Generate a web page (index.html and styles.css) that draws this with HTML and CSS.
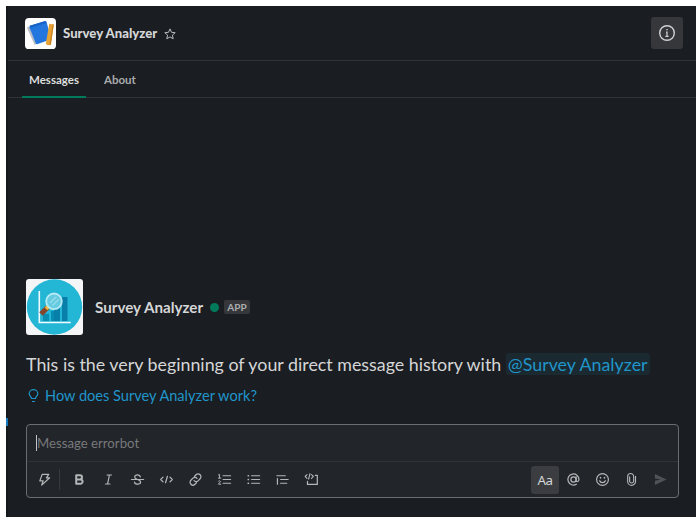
FILE: index.html
```html
<!DOCTYPE html>
<html lang="en">
<head>
<meta charset="utf-8">
<title>Survey Analyzer</title>
<link rel="stylesheet" href="styles.css">
</head>
<body>
<div class="app">
  <div class="rail"><span class="rail-mark"></span></div>
  <main class="panel">
    <header class="header">
      <svg class="logo" viewBox="0 0 32 32"><rect width="32" height="32" rx="4" fill="#fff"/><path d="M2 10l2.500-1.500 7.500 18-2 1.300z" fill="#b9bdc4"/><path d="M5 8L21 3.200q1 0 1.300 1L27 22l-14.500 5q-1 0-1.400-1L4.500 9.500z" fill="#2476df"/><path d="M5 8L21 3.200l.9 2-16 5z" fill="#1763c7"/><path d="M25 6l4.700.6-3 21-3.500.6-1.700-1.500z" fill="#e8a536"/><path d="M28.500 6.500l1.200.1-3 21-1.500.4z" fill="#c98521"/></svg>
      <h1 class="title">Survey Analyzer</h1>
      <svg class="star" viewBox="0 0 12 12"><path d="M6 .9l1.500 3.400 3.700.4-2.800 2.400.8 3.700L6 8.900l-3.200 1.900.8-3.700L.8 4.700l3.700-.4z"/></svg>
      <button class="info" aria-label="Details"><svg viewBox="0 0 18 18"><circle cx="9" cy="9" r="7.300"/><path d="M8 8.200h1v4M7.400 12.400h3.200" stroke-width="1.200"/><path d="M8.300 5.600h1.400"/></svg></button>
    </header>
    <nav class="tabs"><span class="tab active">Messages</span><span class="tab">About</span></nav>
    <section class="history">
      <div class="profile">
        <svg class="avatar" viewBox="0 0 57 56"><rect width="57" height="56" rx="3" fill="#f4f5f6"/><circle cx="28.500" cy="28" r="27.700" fill="#24b6d5"/><path d="M17 35h6v7h-6zM25 32h5v10h-5z" fill="#078cb2"/><path d="M28 25h6v17h-6zM36 18h5.500v24H36z" fill="#087fa9"/><path d="M13.300 12v31.500h31.500" fill="none" stroke="#eefafd" stroke-width="1.600"/><path d="M21.500 28.500l-6.500 6.500" stroke="#87452c" stroke-width="5"/><path d="M23 26.800l-3 3" stroke="#edb63a" stroke-width="4"/><circle cx="28" cy="22.300" r="7.800" fill="#66cbe0" stroke="#b5eaf5" stroke-width="1.800"/><path d="M24 24l6-6M26.500 26.500l6-6" stroke="#91dcea" stroke-width="1.500"/></svg>
        <h2 class="name">Survey Analyzer</h2><span class="presence"></span><span class="badge">APP</span>
      </div>
      <p class="intro">This is the very beginning of your direct message history with <span class="mention">@Survey Analyzer</span></p>
      <div class="help"><svg viewBox="0 0 11 14"><path d="M3.500 9.500C3.500 7.700 1.200 7 1.200 4.700a4.300 4 0 0 1 8.600 0C9.800 7 7.500 7.700 7.500 9.500zM4 12.500h3"/></svg><span>How does Survey Analyzer work?</span></div>
    </section>
    <section class="composer">
      <div class="input"><span class="caret"></span><span class="placeholder">Message errorbot</span></div>
      <div class="toolbar">
        <span class="tool first"><svg viewBox="0 0 16 16"><path d="M5.500 2.500h7L10 6.200h3.500L5 14l1.500-4.500H3z"/></svg></span>
        <span class="separator"></span>
        <span class="tool"><svg viewBox="0 0 16 16"><path stroke-width="2.100" d="M4.500 3.500h4a2.200 2.200 0 0 1 0 4.400h-4zM4.500 7.900H9a2.300 2.300 0 0 1 0 4.600H4.500z"/></svg></span>
        <span class="tool"><svg viewBox="0 0 16 16"><path d="M6.500 3.200h4.700M4.800 12.800h4.700M9 3.200L7 12.800"/></svg></span>
        <span class="tool"><svg viewBox="0 0 16 16"><path d="M1.500 8h13M11 5.300C10.500 2.500 5 2.400 5 5.300 5 6.700 6.200 7.300 8 8c2 .6 3.300 1.200 3.300 2.700 0 3-6 3-6.500 0"/></svg></span>
        <span class="tool"><svg viewBox="0 0 16 16"><path d="M4.300 5.500L1.800 8l2.500 2.500M11.700 5.500L14.200 8l-2.500 2.500M9 4.500l-2 7"/></svg></span>
        <span class="tool"><svg viewBox="0 0 16 16"><path d="M7 4.500l1.600-1.600a2.900 2.900 0 0 1 4.300 4.300l-2.200 2.200a2.900 2.900 0 0 1-4.300-.2M9 11.500l-1.600 1.600a2.900 2.900 0 0 1-4.300-4.300l2.200-2.200a2.900 2.900 0 0 1 4.300.2"/></svg></span>
        <span class="tool"><svg viewBox="0 0 16 16"><path d="M6.500 4h8M6.500 8h8M6.500 12h8"/><path stroke-width="1" d="M1.500 3.200l1.200-.7v4M1.500 6.500h2.600M1.500 9.800c.5-1 2.500-.6 2 .7l-2 2.500H4"/></svg></span>
        <span class="tool"><svg viewBox="0 0 16 16"><path d="M6 4h8.500M6 8h8.500M6 12h8.500"/><path stroke-width="1.800" d="M2.400 4h.2M2.400 8h.2M2.400 12h.2"/></svg></span>
        <span class="tool"><svg viewBox="0 0 16 16"><path d="M2 4h9M6 8h8M6 12h6.500M2.600 7v6"/></svg></span>
        <span class="tool"><svg viewBox="0 0 16 16"><path d="M12 3.500h2.200v9.800H3.700V10"/><path stroke-width="1.200" d="M3.200 2.700L1.200 4.700l2 2M8 2.700l2 2-2 2M6.400 1.800L4.900 7.500"/></svg></span>
        <span class="tool format">Aa</span>
        <span class="tool"><svg viewBox="0 0 16 16"><circle cx="8" cy="8" r="2.800"/><path d="M10.800 5.200v3.700c0 2 3 1.700 3-1A5.900 5.900 0 1 0 11 13"/></svg></span>
        <span class="tool"><svg viewBox="0 0 16 16"><circle cx="8" cy="8" r="6.300"/><path d="M5 9.300c.8 2.600 5.200 2.600 6 0"/><path stroke-width="1.700" d="M5.900 6v.3M10.100 6v.3"/></svg></span>
        <span class="tool"><svg viewBox="0 0 16 16"><path stroke-width="1.200" d="M12.300 4.500V10a4.200 4.200 0 0 1-8.400 0V4.800a3.200 3.200 0 0 1 6.400 0V10a2.200 2.200 0 0 1-4.300 0V5"/></svg></span>
        <span class="tool send"><svg viewBox="0 0 16 16"><path d="M2 2.200L14.500 8 2 13.800V9.200L8 8 2 6.800z"/></svg></span>
      </div>
    </section>
  </main>
</div>
</body>
</html>
```
FILE: styles.css
```css
* { box-sizing: border-box; }
body { margin: 0; height: 517px; padding: 6px 0 0 6px; overflow: hidden; background: #fff; color: #d5d6d7; font-family: Lato, sans-serif; }
h1, h2, p { margin: 0; }
svg { display: block; flex: none; }
.app { display: flex; height: 511px; background: #1a1d21; }
.rail { width: 2px; padding-top: 412px; background: #15191e; }
.rail-mark { display: block; height: 8px; background: #1679bd; }
.panel { flex: 1; display: flex; flex-direction: column; }
.header { display: flex; align-items: center; height: 55px; padding: 0 13px 0 17px; border-bottom: 1px solid #303337; }
.logo { width: 31px; height: 31px; }
.title { margin-left: 7px; width: 95px; font-size: 13.150px; line-height: 18px; font-weight: 900; white-space: nowrap; }
.star { width: 12px; height: 12px; margin: 2px 0 0 6px; fill: none; stroke: #b9babc; stroke-width: 1; }
.info { display: grid; place-items: center; width: 32px; height: 32px; margin-left: auto; padding: 0; border: 0; border-radius: 3px; background: #35373b; }
.info svg { width: 18px; height: 18px; fill: none; stroke: #d0d1d2; stroke-width: 1.400; }
.tabs { display: flex; gap: 10px; height: 37px; padding-left: 14px; border-bottom: 1px solid #303337; }
.tab { height: 37px; padding: 0 8px; color: #a9abad; font-size: 11.500px; line-height: 37px; font-weight: 700; }
.tab.active { width: 64px; padding: 0 7px; color: #dcdddd; border-bottom: 2px solid #007a5a; }
.history { height: 326px; padding: 180px 18px 0; }
.profile { display: flex; align-items: center; height: 57px; }
.avatar { width: 57px; height: 56px; }
.name { width: 108px; margin-left: 12px; font-size: 15.200px; line-height: 20px; font-weight: 700; white-space: nowrap; }
.presence { width: 9px; height: 9px; margin: 1px 0 0 7px; border-radius: 50%; background: #007a5a; }
.badge { width: 26px; height: 14px; margin-left: 5px; border-radius: 2px; background: #35373b; color: #acaeb0; font-size: 10px; line-height: 14px; font-weight: 700; text-align: center; }
.intro { margin-top: 17px; font-size: 17.830px; line-height: 24px; white-space: nowrap; }
.mention { padding: 0 2px; border-radius: 3px; background: #1b2930; color: #2095ca; }
.help { display: flex; align-items: center; margin-top: 10px; gap: 6px; color: #2095ca; font-size: 14.570px; line-height: 20px; white-space: nowrap; }
.help svg { width: 11px; height: 14px; margin-left: 2px; fill: none; stroke: #2095ca; stroke-width: 1.200; }
.composer { width: 653px; height: 74px; margin-left: 18px; border: 1px solid #6b6d70; border-radius: 4px; background: #222529; }
.input { display: flex; align-items: center; height: 37px; padding-left: 9px; border-bottom: 1px solid #303337; color: #77797c; font-size: 13.200px; }
.caret { width: 1px; height: 16px; background: #c3c4c5; }
.toolbar { display: flex; align-items: center; height: 35px; padding-left: 3px; }
.tool { display: grid; place-items: center; width: 29px; height: 28px; flex: none; }
.tool svg { width: 15px; height: 15px; fill: none; stroke: #b5b6b8; stroke-width: 1.300; stroke-linejoin: round; stroke-linecap: round; }
.separator { width: 1px; height: 21px; margin-right: 5px; background: #36393d; }
.format { width: 28px; margin: 0 0 0 auto; border-radius: 3px; background: #3b3d41; color: #d5d6d7; font: 13.300px "Noto Sans", sans-serif; letter-spacing: -.4px; }
.tool.send { margin-right: 3px; }
.tool.send svg { fill: #505256; stroke: none; }
```
